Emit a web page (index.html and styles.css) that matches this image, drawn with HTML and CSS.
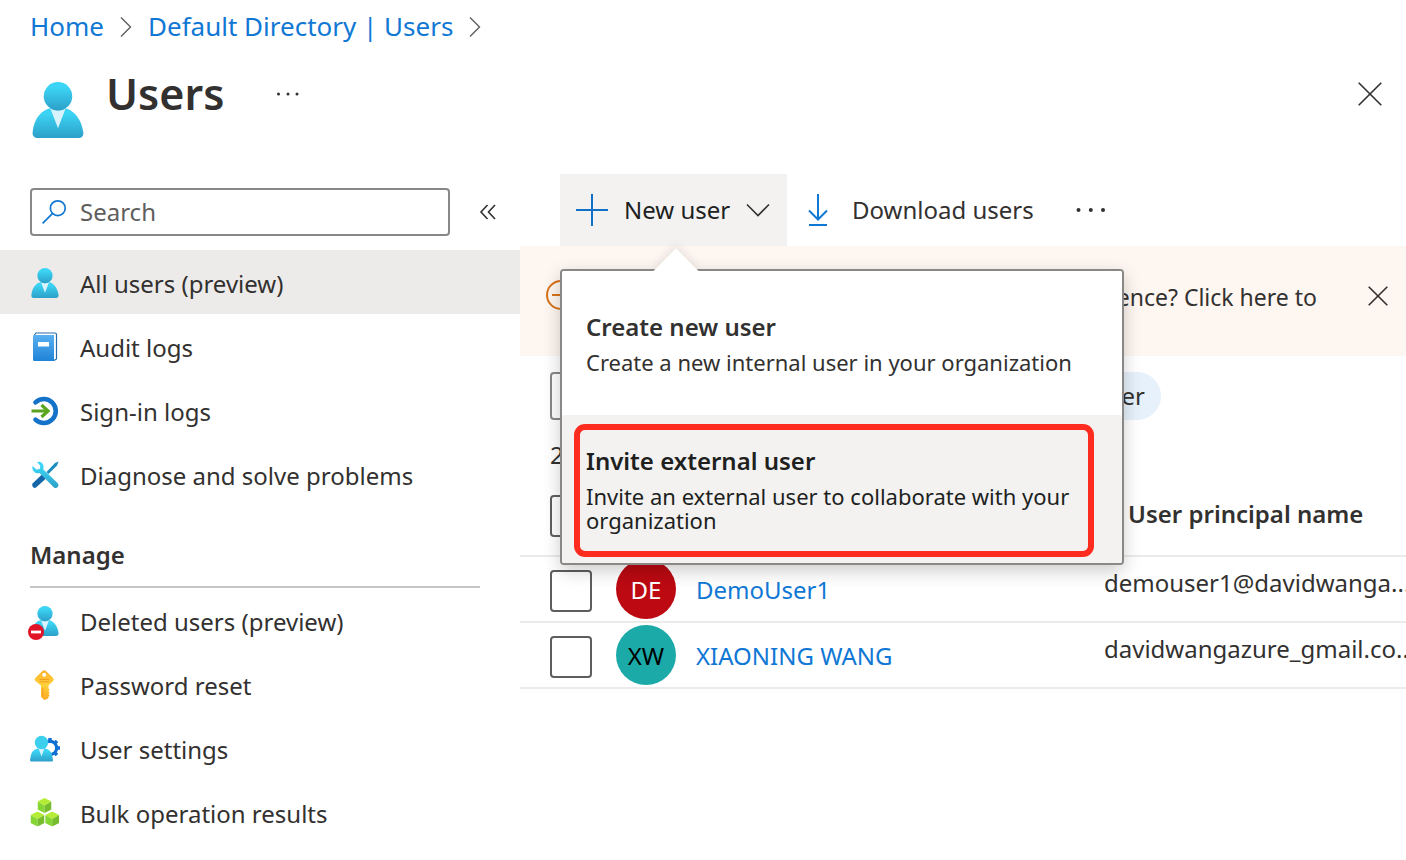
FILE: index.html
```html
<!DOCTYPE html>
<html lang="en">
<head>
<meta charset="utf-8">
<title>Users</title>
<link rel="stylesheet" href="styles.css">
</head>
<body>
<svg class="defs" aria-hidden="true">
  <defs>
    <linearGradient id="head" x1="0" y1="0" x2="0" y2="1"><stop offset=".2" stop-color="#3cd4f4"/><stop offset="1" stop-color="#2c9fc8"/></linearGradient>
    <linearGradient id="key" x1="0" y1="0" x2="0" y2="1"><stop offset="0" stop-color="#feb02a"/><stop offset=".5" stop-color="#ffd13a"/><stop offset="1" stop-color="#fba926"/></linearGradient>
    <linearGradient id="book" x1="0" y1="0" x2="0" y2="1"><stop offset="0" stop-color="#5ab0f0"/><stop offset="1" stop-color="#1f83d8"/></linearGradient>
    <symbol id="user" viewBox="0 0 18 18">
      <path fill="url(#head)" d="M15.72 18a1.45 1.45 0 0 0 1.45-1.45.47.47 0 0 0 0-.17C16.59 11.81 14 8.09 9 8.09S1.34 11.24.83 16.39A1.46 1.46 0 0 0 2.14 18H15.72Z"/>
      <path fill="#d8f3fc" d="M9 9.17a4.59 4.59 0 0 1-2.48-.73L9 14.86l2.44-6.38A4.53 4.53 0 0 1 9 9.17Z"/>
      <circle fill="url(#head)" cx="9" cy="4.58" r="4.58"/>
    </symbol>
    <symbol id="cube" viewBox="0 0 14 15">
      <path fill="#b4ec36" d="M7 0l7 3.6-7 3.8L0 3.6z"/><path fill="#86d633" d="M0 3.6l7 3.8V15l-7-3.6z"/><path fill="#76bc2d" d="M14 3.6L7 7.4V15l7-3.6z"/>
    </symbol>
  </defs>
</svg>

<nav class="breadcrumb" aria-label="Breadcrumb">
  <a href="#">Home</a>
  <svg width="12" height="20" viewBox="0 0 12 20"><path class="crumb-arrow" d="M1 .5 10.500 10 1 19.500"/></svg>
  <a href="#">Default Directory | Users</a>
  <svg width="12" height="20" viewBox="0 0 12 20"><path class="crumb-arrow" d="M1 .5 10.500 10 1 19.500"/></svg>
</nav>

<header class="page-head">
  <svg class="page-icon" width="56" height="56"><use href="#user"/></svg>
  <h1>Users</h1>
  <button class="icon-btn head-more" aria-label="More"><svg width="24" height="24" viewBox="0 0 24 24"><g fill="#323130"><circle cx="2.500" cy="12" r="1.500"/><circle cx="12" cy="12" r="1.500"/><circle cx="21" cy="12" r="1.500"/></g></svg></button>
  <button class="icon-btn head-close" aria-label="Close"><svg width="24" height="24" viewBox="0 0 24 24"><path class="line" d="M.7.7l22.600 22.600M23.300.7.7 23.300"/></svg></button>
</header>

<div class="layout">
  <aside class="sidebar">
    <div class="search-row">
      <label class="search-box">
        <svg width="24" height="24" viewBox="0 0 24 24" fill="none" stroke="#1078d4" stroke-width="1.700"><circle cx="15.800" cy="8.200" r="7.400"/><path d="M10.600 13.400.6 23.400"/></svg>
        <input type="search" placeholder="Search" aria-label="Search">
      </label>
      <button class="icon-btn" aria-label="Collapse menu"><svg width="16" height="16" viewBox="0 0 16 16"><path class="line" d="M7.500 1 1 8l6.500 7M15 1 8.500 8l6.500 7"/></svg></button>
    </div>
    <nav aria-label="Users menu">
      <a class="item active" href="#"><svg width="30" height="30"><use href="#user"/></svg>All users (preview)</a>
      <a class="item" href="#"><svg width="30" height="30" viewBox="0 0 30 30"><path fill="#fff" stroke="#2b6ca8" stroke-width="1.200" d="M4 3.500 6 1h19q1.500 0 1.500 1.500V27L24 28.500"/><path fill="url(#book)" d="M3 4.500q0-1.500 1.500-1.500H24v26H4.500Q3 29 3 27.500z"/><path fill="#fff" d="M8 10h11v4.500H8z"/></svg>Audit logs</a>
      <a class="item" href="#"><svg width="30" height="30" viewBox="0 0 30 30" fill="none"><path stroke="#1473c8" stroke-width="4.600" stroke-linecap="round" d="M5.500 6.300A12 12 0 1 1 5.500 23.700"/><path stroke="#5aa51e" stroke-width="3" d="M1.500 15h17"/><path stroke="#5aa51e" stroke-width="3.200" d="m11.500 9 6.500 6-6.500 6"/></svg>Sign-in logs</a>
      <a class="item" href="#"><svg width="30" height="30" viewBox="0 0 30 30"><path fill="#1c8cbd" d="M28.500 1.500 25 3l-8.500 9 2 2L27 5.500z"/><path fill="#1566a8" d="m12.500 14-10 9.500q-1 2 .5 3.500 1.500 1.500 3 .5l10.500-9.500z"/><path fill="url(#head)" d="M7 2q5-1 6.500 4 .3 2-.3 3.300L28 23.500q1.200 2-.4 3.800-1.800 1.500-3.600.2L9.500 13Q5.500 14 3 10.500 1.800 8 2.500 6l4 3.500 3.200-.6.600-3.200z"/></svg>Diagnose and solve problems</a>
      <h2>Manage</h2>
      <a class="item" href="#"><svg width="30" height="30" viewBox="0 0 30 30"><use href="#user" width="30" height="30"/><circle cx="6" cy="26" r="8" fill="#e11428"/><path fill="#fff" d="M1 24.600h10v2.800H1z"/></svg>Deleted users (preview)</a>
      <a class="item" href="#"><svg width="30" height="30" viewBox="0 0 30 30"><path fill="url(#key)" d="M12.700.8q1.500-1.300 3 0l7.400 7.200q1.400 1.500 0 3L18.500 15.500v3l1.200 1.200-1.200 1.500 1.200 1.500-1.200 1.300 1.200 1.600-1.400 1.400v1.500L14.300 30 11 27V15.500L5.300 11q-1.400-1.500 0-3z"/><circle cx="14.200" cy="4.800" r="2" fill="#fff"/><path stroke="#f59b20" stroke-width="1.100" d="M9.500 9.500h9.500M9.500 11.800h9.500M12.800 18v8"/></svg>Password reset</a>
      <a class="item" href="#"><svg width="30" height="30" viewBox="0 0 30 30"><g fill="none" stroke="#1070d4"><circle cx="20" cy="14" r="6.500" stroke-width="3.400"/><path stroke-width="3.500" d="M20 8V4M24.200 9.800l2.800-2.800M26 14h4M24.200 18.200l2.800 2.800M20 20v4"/></g><circle cx="20" cy="14" r="5" fill="#fff"/><path fill="url(#head)" d="M0 26Q1 15 8 14.500h7q7 .5 8 11.500 0 1.500-1 1.500H1.200Q0 27.500 0 26z"/><path fill="#d8f3fc" d="M8.500 14h6l-3 8.500z"/><circle cx="11.500" cy="8.500" r="6.700" fill="#3dcfee"/></svg>User settings</a>
      <a class="item" href="#"><svg width="30" height="30" viewBox="0 0 30 30"><use href="#cube" x="7.500" width="14" height="15"/><use href="#cube" x=".5" y="13.500" width="14" height="15"/><use href="#cube" x="15.200" y="13.500" width="14" height="15"/></svg>Bulk operation results</a>
    </nav>
  </aside>

  <main>
    <div class="toolbar">
      <div class="menu-anchor">
        <button class="tool new-user" aria-expanded="true">
          <svg width="32" height="32" viewBox="0 0 32 32"><path stroke="#1070c8" stroke-width="2" d="M0 16h32M16 0v32"/></svg>
          New user
          <svg width="24" height="14" viewBox="0 0 24 14"><path class="line" d="M1 1.500 12 12.500 23 1.500"/></svg>
        </button>
        <div class="callout" role="menu">
          <button class="option" role="menuitem"><strong>Create new user</strong><span>Create a new internal user in your organization</span></button>
          <button class="option selected" role="menuitem"><strong>Invite external user</strong><span>Invite an external user to collaborate with your organization</span></button>
        </div>
      </div>
      <button class="tool"><svg width="20" height="32" viewBox="0 0 20 32" fill="none" stroke="#1078d4" stroke-width="2"><path d="M10 0v25M1 16.500l9 9 9-9M1 31h18"/></svg>Download users</button>
      <button class="tool more" aria-label="More commands"><svg width="32" height="24" viewBox="0 0 32 24" fill="#323130"><circle cx="3.500" cy="12" r="2"/><circle cx="15.800" cy="12" r="2"/><circle cx="28" cy="12" r="2"/></svg></button>
    </div>

    <div class="banner">
      <svg width="30" height="30" viewBox="0 0 30 30" fill="none" stroke="#d8731a" stroke-width="2"><circle cx="15" cy="15" r="14"/><path d="M6 15h18"/></svg>
      <p>Switch back to the legacy users experience? Click here to</p>
      <button class="icon-btn" aria-label="Dismiss"><svg width="20" height="20" viewBox="0 0 20 20"><path class="line" d="M.7.7l18.600 18.600M19.300.7.7 19.300"/></svg></button>
    </div>

    <div class="filters">
      <input class="filter-box" type="text" aria-label="Search users">
      <button class="chip">Add filter</button>
    </div>
    <p class="count">2 users found</p>

    <table>
      <colgroup><col class="c-check"><col class="c-name"><col></colgroup>
      <thead><tr><th><input type="checkbox" aria-label="Select all"></th><th>Name</th><th class="upn-head">User principal name</th></tr></thead>
      <tbody>
        <tr><td><input type="checkbox" aria-label="Select DemoUser1"></td><td><div class="person"><span class="avatar red">DE</span><a href="#">DemoUser1</a></div></td><td class="upn">demouser1@davidwanga...</td></tr>
        <tr><td><input type="checkbox" aria-label="Select XIAONING WANG"></td><td><div class="person"><span class="avatar teal">XW</span><a href="#">XIAONING WANG</a></div></td><td class="upn">davidwangazure_gmail.co...</td></tr>
      </tbody>
    </table>
  </main>
</div>
</body>
</html>
```
FILE: styles.css
```css
* { box-sizing: border-box; }
body {
  margin: 0;
  font: 24px/32px "Noto Sans", "Open Sans", sans-serif;
  color: #323130;
  background: #fff;
  overflow-x: hidden;
}
button, input { font: inherit; color: inherit; }
button { border: 0; background: none; padding: 0; text-align: left; }
svg { display: block; flex: none; overflow: visible; }
a { color: #1078d4; text-decoration: none; }
p, h1, h2 { margin: 0; }
.defs { position: absolute; width: 0; height: 0; }
.line { fill: none; stroke: #323130; stroke-width: 1.6; }
.crumb-arrow { fill: none; stroke: #605e5c; stroke-width: 1.4; }
.icon-btn { display: flex; }

.breadcrumb { display: flex; align-items: center; gap: 16px; height: 54px; padding: 0 30px; font-size: 26px; }
.breadcrumb a { padding-bottom: 2px; }

.page-head { display: flex; align-items: flex-start; height: 120px; padding: 8px 24px 0 30px; }
.page-icon { margin-top: 20px; }
h1 { margin-left: 20px; font-size: 43px; line-height: 64px; font-weight: 600; }
.head-more { margin: 20px 0 0 52px; }
.head-close { margin: 20px 0 0 auto; }

.layout { display: flex; }
.sidebar { flex: 0 0 520px; min-width: 0; padding-top: 14px; }
.search-row { display: flex; align-items: center; gap: 30px; padding: 0 0 0 30px; margin-bottom: 14px; }
.search-box {
  display: flex; align-items: center; gap: 14px;
  flex: 0 0 420px; height: 48px; padding: 0 10px;
  border: 2px solid #8a8886; border-radius: 4px;
}
.search-box input { flex: 1; min-width: 0; padding: 0; border: 0; outline: 0; background: none; }
.search-box input::placeholder { color: #605e5c; opacity: 1; }
.item { display: flex; align-items: center; gap: 20px; height: 64px; padding: 4px 30px 0; color: #323130; }
.item svg { margin-bottom: 2px; }
.active { background: #edebe9; }
h2 { margin: 0 40px 0 30px; padding: 33px 0 15px; border-bottom: 2px solid #c8c6c4; font-size: 24px; line-height: 32px; font-weight: 600; }

main { flex: 1; min-width: 0; }
.toolbar { display: flex; height: 72px; padding-left: 40px; }
.menu-anchor { position: relative; }
.tool { display: flex; align-items: center; gap: 24px; height: 72px; padding-left: 21px; white-space: nowrap; }
.new-user { width: 227px; gap: 16px; padding: 0 16px; background: #f3f2f1; color: #201f1e; }
.more { padding-left: 41px; }

.callout {
  position: absolute; left: 0; top: 95px; z-index: 2;
  width: 564px; border: 2px solid #8a8886; border-radius: 4px;
  background: #fff; box-shadow: 0 6px 18px rgba(0, 0, 0, .2);
}
.callout::before {
  content: ""; position: absolute; left: 98px; top: -16px;
  width: 32px; height: 32px; background: #fff; transform: rotate(45deg);
  box-shadow: -3px -3px 8px rgba(0, 0, 0, .08);
}
.option { position: relative; display: block; width: 100%; padding: 38px 24px 41px; background: #fff; border-radius: 2px; }
.option strong { display: block; font-weight: 600; line-height: 36px; }
.option span { display: block; margin-top: 5px; font-size: 22px; line-height: 24px; }
.selected { padding: 28px 24px 31px; background: #f3f2f1; color: #201f1e; }
.selected::after {
  content: ""; position: absolute; inset: 9px 28px 6px 12px;
  border: 6px solid #fe2b1f; border-radius: 11px;
}

.banner { display: flex; align-items: flex-start; height: 110px; padding: 34px 18px 0 26px; background: #fef6f0; }
.banner p { margin: 1px 51px 0 auto; font-size: 23px; white-space: nowrap; }
.banner .icon-btn { margin-top: 6px; }

.filters { display: flex; gap: 20px; padding: 16px 30px 0; }
.filter-box { width: 440px; height: 48px; border: 2px solid #8a8886; border-radius: 4px; }
.chip { width: 151px; height: 48px; padding-right: 16px; border-radius: 24px; background: #e6f1fb; text-align: right; }
.count { padding: 19px 30px 4px; }

table { width: 100%; table-layout: fixed; border-collapse: separate; border-spacing: 0; }
.c-check { width: 96px; }
.c-name { width: 488px; }
th, td { padding: 0; text-align: left; vertical-align: middle; border-bottom: 2px solid #edebe9; white-space: nowrap; overflow: hidden; }
th { height: 82px; font-weight: 600; }
td { height: 66px; }
.upn-head { padding: 0 0 2px 24px; }
.upn { padding-bottom: 12px; }
input[type="checkbox"] {
  appearance: none; display: block; width: 42px; height: 42px; margin: 2px 0 0 30px;
  border: 2px solid #605e5c; border-radius: 4px; background: #fff;
}
td input[type="checkbox"] { margin-top: 4px; }
.person { display: flex; align-items: center; gap: 20px; }
.person a, .avatar { padding-top: 2px; }
.avatar { display: flex; align-items: center; justify-content: center; width: 60px; height: 60px; border-radius: 50%; }
.red { background: #bc0912; color: #fff; }
.teal { background: #1caaa8; color: #000; }
```
